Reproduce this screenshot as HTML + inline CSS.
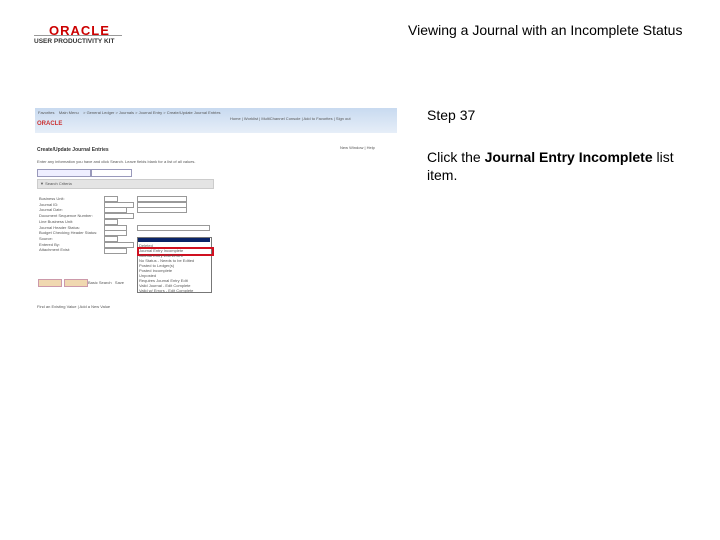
<!DOCTYPE html>
<html><head><meta charset="utf-8"><style>
body{margin:0;width:720px;height:540px;background:#fff;position:relative;overflow:hidden;font-family:"Liberation Sans",sans-serif}
.a{position:absolute;white-space:nowrap}
.s{font-size:4px;color:#555}
.f{position:absolute;border:1px solid #999;background:#fff;height:4px}
</style></head><body>
<div class="a" style="left:49px;top:23px;font-size:13px;font-weight:bold;color:#c00;letter-spacing:1px">ORACLE</div>
<div class="a" style="left:34px;top:35px;width:88px;border-top:1px solid #999"></div>
<div class="a" style="left:34px;top:38px;font-size:6.5px;font-weight:bold;color:#333">USER PRODUCTIVITY KIT</div>
<div class="a" style="left:408px;top:22px;font-size:14px;color:#000">Viewing a Journal with an Incomplete Status</div>
<div class="a" style="left:427px;top:107px;font-size:14px">Step 37</div>
<div class="a" style="left:427px;top:148px;font-size:14px;line-height:18px;white-space:normal;width:270px">Click the <b>Journal Entry Incomplete</b> list item.</div>

<div class="a" style="left:35px;top:108px;width:362px;height:25px;background:linear-gradient(#c8daf0,#e6eef8)"></div>
<div class="a s" style="left:38px;top:110px">Favorites &nbsp;&nbsp; Main Menu &nbsp;&nbsp; &gt; General Ledger &gt; Journals &gt; Journal Entry &gt; Create/Update Journal Entries</div>
<div class="a s" style="left:230px;top:116px">Home | Worklist | MultiChannel Console | Add to Favorites | Sign out</div>
<div class="a" style="left:37px;top:121px;font-size:6px;font-weight:bold;color:#c33">ORACLE</div>
<div class="a s" style="left:340px;top:145px">New Window | Help</div>
<div class="a" style="left:37px;top:147px;font-size:5px;font-weight:bold;color:#333">Create/Update Journal Entries</div>
<div class="a s" style="left:37px;top:159px">Enter any information you have and click Search. Leave fields blank for a list of all values.</div>
<div class="a" style="left:37px;top:169px;width:52px;height:6px;border:1px solid #99b;background:#eef"></div>
<div class="a" style="left:91px;top:169px;width:39px;height:6px;border:1px solid #99b;background:#fff"></div>
<div class="a" style="left:37px;top:179px;width:175px;height:8px;background:#e4e4e4;border:1px solid #ccc"></div>
<div class="a s" style="left:40px;top:181px">▼ Search Criteria</div>
<div class="a s" style="left:39px;top:196px;line-height:5.7px">Business Unit:<br>Journal ID:<br>Journal Date:<br>Document Sequence Number:<br>Line Business Unit:<br>Journal Header Status:<br>Budget Checking Header Status:<br>Source:<br>Entered By:<br>Attachment Exist:</div>
<div class="f" style="left:104px;top:196px;width:12px"></div>
<div class="f" style="left:104px;top:202px;width:28px"></div>
<div class="f" style="left:104px;top:207px;width:21px"></div>
<div class="f" style="left:104px;top:213px;width:28px"></div>
<div class="f" style="left:104px;top:219px;width:12px"></div>
<div class="f" style="left:104px;top:225px;width:21px"></div>
<div class="f" style="left:104px;top:230px;width:21px"></div>
<div class="f" style="left:104px;top:236px;width:12px"></div>
<div class="f" style="left:104px;top:242px;width:28px"></div>
<div class="f" style="left:104px;top:248px;width:21px"></div>
<div class="f" style="left:137px;top:196px;width:48px"></div>
<div class="f" style="left:137px;top:202px;width:48px"></div>
<div class="f" style="left:137px;top:207px;width:48px"></div>
<div class="f" style="left:137px;top:225px;width:71px"></div>
<div class="a" style="left:137px;top:237px;width:73px;height:54px;border:1px solid #777;background:#fff"></div>
<div class="a" style="left:138px;top:238px;width:72px;height:4px;background:#0a2468"></div>
<div class="a" style="left:137px;top:247px;width:73px;height:5px;border:2px solid #d01020"></div>
<div class="a s" style="left:139px;top:243px;line-height:5px">Deleted<br>Journal Entry Incomplete<br>Journal Entry Edit Errors<br>No Status - Needs to be Edited<br>Posted to Ledger(s)<br>Posted Incomplete<br>Unposted<br>Requires Journal Entry Edit<br>Valid Journal - Edit Complete<br>Valid w/ Errors - Edit Complete</div>
<div class="a" style="left:38px;top:279px;width:22px;height:6px;background:#f0d8b0;border:1px solid #c9a"></div>
<div class="a" style="left:64px;top:279px;width:22px;height:6px;background:#f0d8b0;border:1px solid #c9a"></div>
<div class="a s" style="left:88px;top:280px">Basic Search &nbsp; Save</div>
<div class="a s" style="left:37px;top:304px">Find an Existing Value | Add a New Value</div>
</body></html>
